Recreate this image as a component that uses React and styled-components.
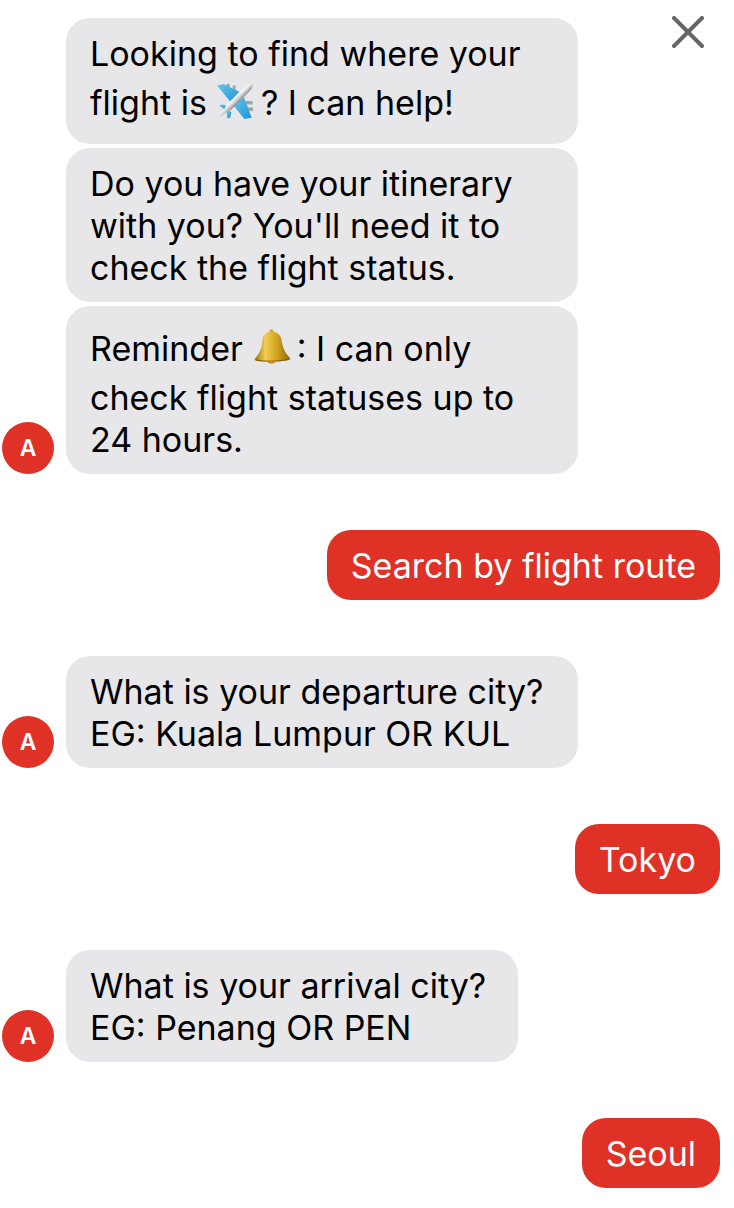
import React from "react";
import styled, { createGlobalStyle } from "styled-components";

const Global = createGlobalStyle`
  html, body { margin: 0; padding: 0; background: #fff; }
  body { font-family: Inter, "Liberation Sans", Arial, sans-serif; }
`;
const Page = styled.div`
  position: relative;
  width: 734px;
  height: 1208px;
  box-sizing: border-box;
  padding: 18px 14px 20px 2px;
  display: flex;
  flex-direction: column;
  gap: 56px;
  overflow: hidden;
`;
const Close = styled.button`
  position: absolute;
  top: 16px;
  left: 672px;
  width: 32px;
  height: 32px;
  padding: 0;
  border: 0;
  background: none;
  display: block;
  svg { display: block; }
`;
const BotGroup = styled.div`
  display: flex;
  align-items: flex-end;
  gap: 12px;
`;
const Avatar = styled.div`
  width: 52px;
  height: 52px;
  border-radius: 50%;
  background: #e03127;
  color: #fff;
  font-size: 23px;
  font-weight: 600;
  display: flex;
  align-items: center;
  justify-content: center;
  flex: none;
`;
const Stack = styled.div`
  display: flex;
  flex-direction: column;
  gap: 4px;
`;
const BotBubble = styled.div`
  width: ${(p) => p.$width}px;
  box-sizing: border-box;
  padding: 15px 24px 13px;
  background: #e7e7e9;
  color: #000;
  border-radius: 24px;
  font-size: 34px;
  line-height: 42px;
`;
const UserRow = styled.div`
  display: flex;
  justify-content: flex-end;
`;
const UserBubble = styled.div`
  padding: 15px 24px 13px;
  background: #e03127;
  color: #fff;
  border-radius: 24px;
  font-size: 34px;
  line-height: 42px;
  white-space: nowrap;
`;
const EmojiLine = styled.span`
  display: flex;
  align-items: center;
  height: 56px;
  white-space: pre;
`;
const Emoji = styled.svg`
  width: 38px;
  height: 38px;
  flex: none;
  margin: 0 ${(p) => p.$mr}px ${(p) => p.$up}px ${(p) => p.$ml}px;
`;

const Plane = () => (
  <Emoji viewBox="0 0 38 38" $ml={9} $mr={7} $up={5} role="img" aria-label="airplane">
    <defs>
      <linearGradient id="pb" x1="0" y1="0" x2="1" y2="1">
        <stop offset="0" stopColor="#62c6ee" />
        <stop offset="1" stopColor="#1e95d6" />
      </linearGradient>
      <linearGradient id="pw" gradientUnits="userSpaceOnUse" x1="19" y1="11" x2="25" y2="17">
        <stop offset="0" stopColor="#ffffff" />
        <stop offset="0.55" stopColor="#ececec" />
        <stop offset="1" stopColor="#9b9b9b" />
      </linearGradient>
    </defs>
    <path d="M10.700 2H13.700V7H10.700zM16.700 3.500H19.500V9H16.700z" fill="#a2a2a2" />
    <path d="M28 19H36.500V22.500H28zM31 25.500H37V29H31z" fill="#a2a2a2" />
    <path d="M1.300 3.700 7.300 2 23.300 9.700 14.500 20z" fill="url(#pb)" />
    <path d="M35.700 35.700 28.300 37 17.500 23.500 27.500 14z" fill="url(#pb)" />
    <path d="M3 23.500 6.500 22.500 12.500 24.500 9.500 28z" fill="url(#pb)" />
    <path d="M11.300 36.300 14 36 15.500 30 10.500 28z" fill="url(#pb)" />
    <path d="M30 3.500C32.500 1.800 35.500 1.300 36.300 2.200 37 3.200 36.400 5.800 34.800 8L15.500 27.500 10 30.500 4.300 34.800 3.700 34.200 7.500 28.500 10.800 22.500z" fill="url(#pw)" />
  </Emoji>
);
const Bell = () => (
  <Emoji viewBox="0 0 38 38" $ml={11} $mr={5} $up={2} role="img" aria-label="bell">
    <defs>
      <linearGradient id="bg" x1="0" y1="0" x2="1" y2="0">
        <stop offset="0" stopColor="#9a7408" />
        <stop offset="0.3" stopColor="#f0cd55" />
        <stop offset="0.62" stopColor="#cfa41f" />
        <stop offset="1" stopColor="#8f6a07" />
      </linearGradient>
    </defs>
    <ellipse cx="17.500" cy="31.500" rx="4" ry="3" fill="#a8650f" />
    <circle cx="17.500" cy="2.500" r="2" fill="#c49a1c" />
    <path d="M17.500 2C12 3 9 6 8.500 11 8 18 6 24 1 29.500.5 31 1 31.500 3 32 11 33 24 33 33 31.500 36 31 36.500 30 36 29 31 24 28.500 18 27.500 11 27 6 23 3 17.500 2z" fill="url(#bg)" />
    <path d="M2 31C11 32.500 24 32.500 34 30.500" fill="none" stroke="#7f5c06" strokeWidth="1.200" />
    <ellipse cx="17.500" cy="32.500" rx="3" ry="1.800" fill="#c88a2c" />
  </Emoji>
);
const X = () => (
  <svg width="32" height="32" viewBox="0 0 32 32" fill="none" stroke="#666" strokeWidth="4" strokeLinecap="round">
    <path d="M2 2 30 30M30 2 2 30" />
  </svg>
);

export default function App() {
  return (
    <Page>
      <Global />
      <Close aria-label="Close"><X /></Close>
      <BotGroup>
        <Avatar>A</Avatar>
        <Stack>
          <BotBubble $width={512}>
            Looking to find where your
            <EmojiLine>flight is<Plane />? I can help!</EmojiLine>
          </BotBubble>
          <BotBubble $width={512}>
            Do you have your itinerary<br />with you? You'll need it to<br />check the flight status.
          </BotBubble>
          <BotBubble $width={512}>
            <EmojiLine>Reminder<Bell />: I can only</EmojiLine>
            check flight statuses up to<br />24 hours.
          </BotBubble>
        </Stack>
      </BotGroup>
      <UserRow><UserBubble>Search by flight route</UserBubble></UserRow>
      <BotGroup>
        <Avatar>A</Avatar>
        <BotBubble $width={512}>What is your departure city?<br />EG: Kuala Lumpur OR KUL</BotBubble>
      </BotGroup>
      <UserRow><UserBubble>Tokyo</UserBubble></UserRow>
      <BotGroup>
        <Avatar>A</Avatar>
        <BotBubble $width={452}>What is your arrival city?<br />EG: Penang OR PEN</BotBubble>
      </BotGroup>
      <UserRow><UserBubble>Seoul</UserBubble></UserRow>
    </Page>
  );
}
